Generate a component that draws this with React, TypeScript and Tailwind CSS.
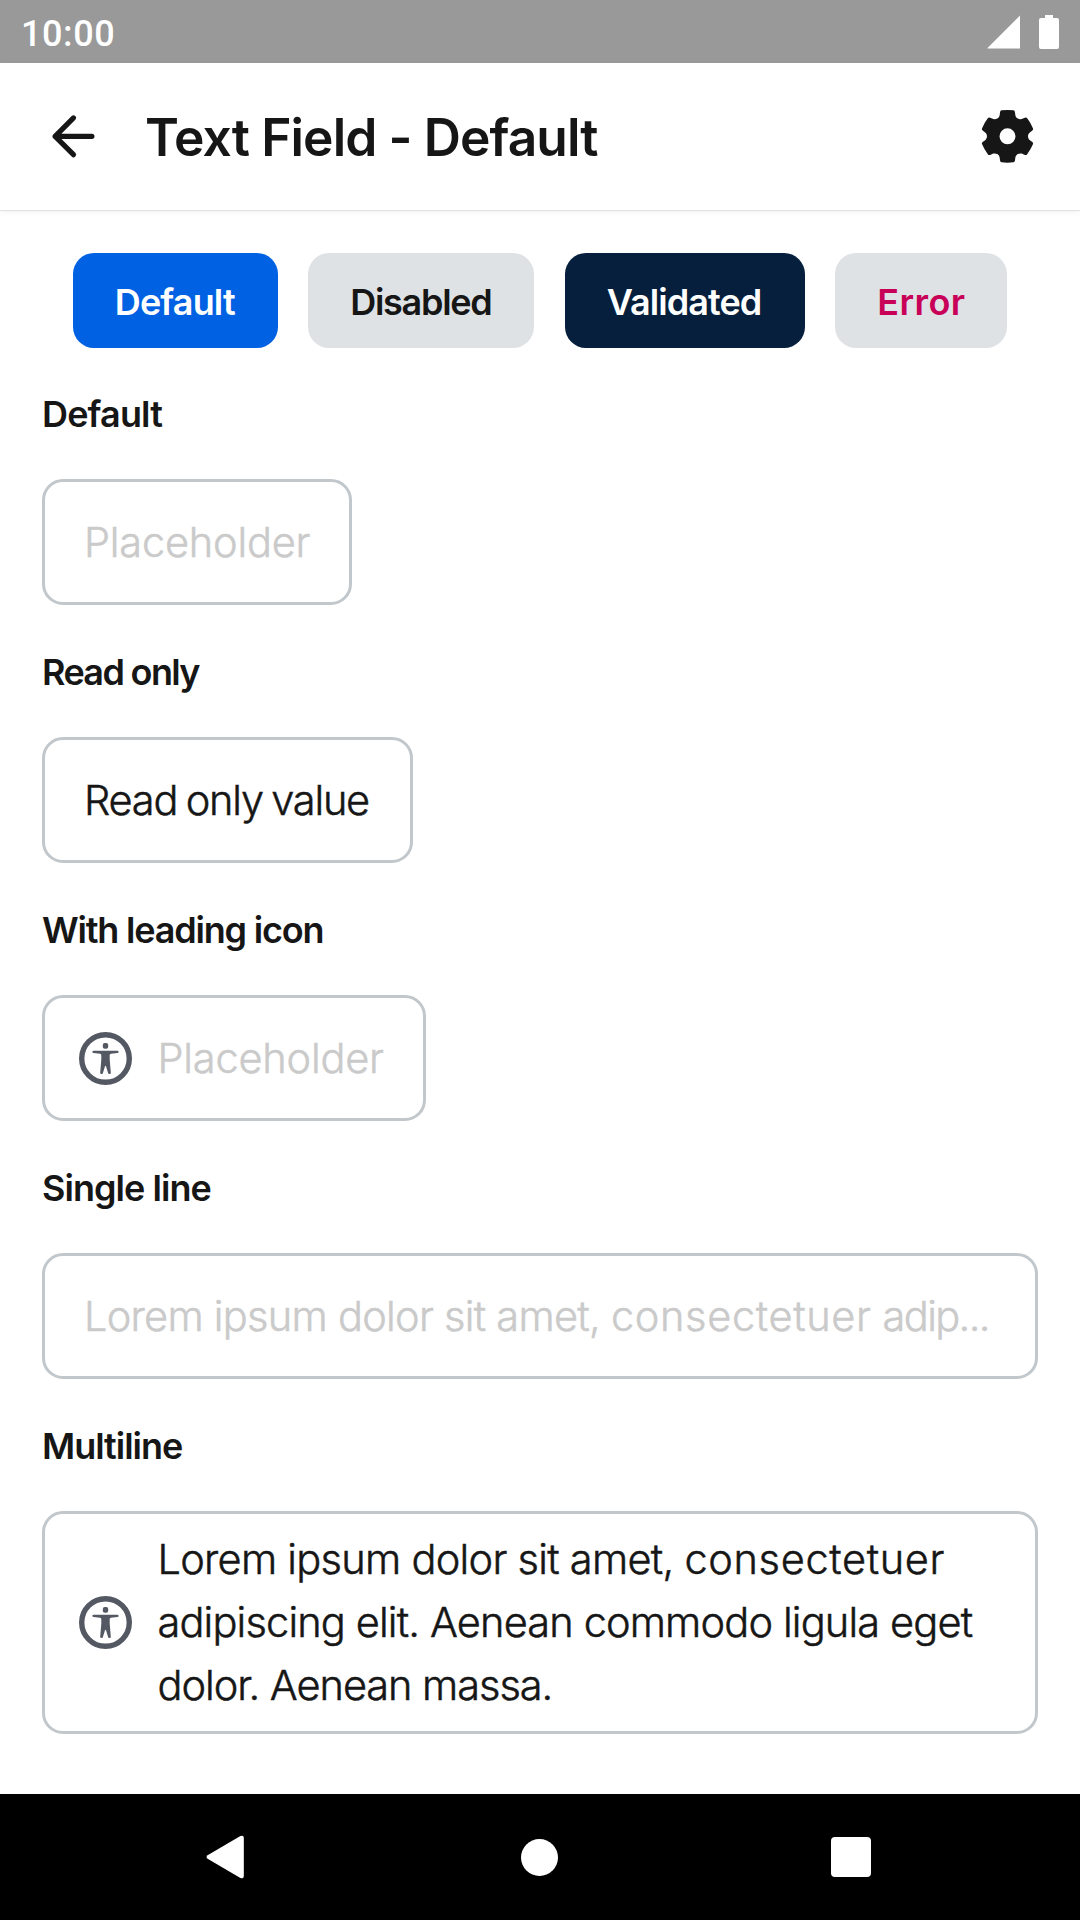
import type { ReactNode } from 'react';

const TOOTH: [string, number[][]][] = [
  ['C', [[-8.9, -18.6], [-8.3, -19.6], [-7.9, -20.9]]],
  ['L', [[-7.4, -24.4]]],
  ['Q', [[-7.2, -25.8], [-6, -26]]],
  ['Q', [[0, -26.8], [6, -26]]],
  ['Q', [[7.2, -25.8], [7.4, -24.4]]],
  ['L', [[7.9, -20.9]]],
  ['C', [[8.3, -19.6], [8.9, -18.6], [10.2, -17.8]]],
];

function gearPath() {
  let d = 'M-10.2 -17.8';
  for (let i = 0; i < 6; i++) {
    const a = (i * Math.PI) / 3;
    const c = Math.cos(a);
    const s = Math.sin(a);
    for (const [cmd, pts] of TOOTH) {
      d += cmd + pts.map(([x, y]) => `${(x * c - y * s).toFixed(2)} ${(x * s + y * c).toFixed(2)}`).join(' ');
    }
  }
  return d + 'Z M8 0A8 8 0 1 0 -8 0A8 8 0 1 0 8 0Z';
}

function GearIcon() {
  return (
    <svg width="54" height="54" viewBox="-27.5 -27.3 54 54" className="mb-px shrink-0">
      <path d={gearPath()} fill="#161616" fillRule="evenodd" />
    </svg>
  );
}

function BackIcon() {
  return (
    <svg width="46" height="46" viewBox="0.5 -0.3 46 46" fill="none" stroke="#161616" strokeWidth="5.2" strokeLinecap="round" strokeLinejoin="round" className="mb-px shrink-0">
      <path d="M23 4.6 4.6 23 23 41.4M4.6 23H41.4" />
    </svg>
  );
}

function AccessibilityIcon() {
  return (
    <svg width="53" height="53" viewBox="-26.5 -26.5 53 53" className="shrink-0">
      <circle r="23.8" fill="none" stroke="#535862" strokeWidth="5.4" />
      <g fill="#535862" stroke="none">
        <rect x="-2.7" y="-15.4" width="5.4" height="5.6" rx="2" />
        <path d="M-12 -7.7H12A1.1 1.1 0 0 1 12 -5.5L5.4 -4.8Q4.2 -4.6 4.2 -3.4V1L5.3 14.2Q5.3 15.6 4.2 15.6H3.6Q2.8 15.6 2.6 14.6L.5 7.8Q0 6.9 -.5 7.8L-2.6 14.6Q-2.8 15.6 -3.6 15.6H-4.2Q-5.3 15.6 -5.3 14.2L-4.2 1V-3.4Q-4.2 -4.6 -5.4 -4.8L-12 -5.5A1.1 1.1 0 0 1 -12 -7.7Z" />
      </g>
    </svg>
  );
}

function StatusBar() {
  return (
    <div className="flex h-[63px] shrink-0 items-center justify-between bg-[#999999] px-[21px] text-white">
      <span className="pt-[4px] font-[Roboto] text-[36px] leading-none font-medium tracking-[0.58px]">10:00</span>
      <div className="flex items-center gap-[19px]">
        <svg width="33" height="34" viewBox="0 0 33 34" fill="white">
          <path d="M.5 33.5V33L33 .5V33.5Z" />
        </svg>
        <svg width="20" height="34" viewBox="0 0 20 34" fill="white">
          <path d="M6 0H14V3H18Q20 3 20 5V32Q20 34 18 34H2Q0 34 0 32V5Q0 3 2 3H6Z" />
        </svg>
      </div>
    </div>
  );
}

function Chip({ className, children }: { className: string; children: ReactNode }) {
  return (
    <button className={`flex h-[95px] items-center rounded-[21px] pt-[2px] pl-[42px] text-[36px] leading-none font-semibold whitespace-nowrap ${className}`}>
      {children}
    </button>
  );
}

function Section({ label, labelClass, fieldClass, icon, children }: {
  label: string;
  labelClass: string;
  fieldClass: string;
  icon?: boolean;
  children: ReactNode;
}) {
  return (
    <section className="mb-[39px] flex flex-col items-start">
      <h2 className={`mb-[38px] pt-px text-[36px] leading-[54px] font-semibold ${labelClass}`}>{label}</h2>
      <div className={`flex items-center rounded-[21px] border-[3px] border-[#c1c7cb] text-[41.5px] leading-[63px] font-light whitespace-nowrap [-webkit-text-stroke:0.5px] ${icon ? 'gap-[25.5px] pl-[34px]' : 'pl-[39px]'} ${fieldClass}`}>
        {icon && <AccessibilityIcon />}
        {children}
      </div>
    </section>
  );
}

function NavBar() {
  return (
    <nav className="flex h-[126px] shrink-0 items-center justify-between bg-black pr-[209px] pl-[206px]">
      <svg width="38" height="44" viewBox="0 0 38 44" fill="white">
        <path d="M1.6 20.2 34.4 1.1Q37.8 -.4 37.8 3V41Q37.8 44.4 34.4 42.9L1.6 23.8Q-.5 22 1.6 20.2Z" />
      </svg>
      <div className="mr-[-4px] size-[37px] rounded-full bg-white" />
      <div className="size-[40px] rounded-[4px] bg-white" />
    </nav>
  );
}

export default function App() {
  return (
    <div className="flex h-[1920px] w-[1080px] flex-col overflow-hidden bg-white font-[Inter,sans-serif] text-[#161616]">
      <StatusBar />
      <header className="z-10 flex h-[147px] shrink-0 items-center bg-white pr-[46px] pl-[51px] shadow-[0_1px_1px_rgba(0,0,0,0.08),0_2px_6px_rgba(0,0,0,0.05)]">
        <BackIcon />
        <h1 className="ml-[48px] flex-1 pt-[2px] text-[51.5px] leading-none font-semibold tracking-[-0.9px]">Text Field - Default</h1>
        <GearIcon />
      </header>
      <main className="flex min-h-0 flex-1 flex-col px-[42px] pt-[43px]">
        <div className="mb-[38px] flex justify-center gap-[30.5px]">
          <Chip className="w-[205px] bg-[#0061e3] tracking-[-0.85px] text-white">Default</Chip>
          <Chip className="w-[226px] bg-[#dfe2e5] tracking-[-1.29px]">Disabled</Chip>
          <Chip className="w-[240px] bg-[#051f3c] tracking-[-0.93px] text-white">Validated</Chip>
          <Chip className="w-[172px] bg-[#dfe2e5] tracking-[0.41px] text-[#c80058]">Error</Chip>
        </div>
        <Section label="Default" labelClass="tracking-[-0.85px]" fieldClass="h-[126px] w-[310px]">
          <span className="tracking-[-0.2px] text-[#cacaca]">Placeholder</span>
        </Section>
        <Section label="Read only" labelClass="tracking-[-1.65px]" fieldClass="h-[126px] w-[371px]">
          <span className="tracking-[-1.2px] [word-spacing:-2px]">Read only value</span>
        </Section>
        <Section label="With leading icon" labelClass="tracking-[-1.19px]" fieldClass="h-[126px] w-[384px]" icon>
          <span className="tracking-[-0.2px] text-[#cacaca]">Placeholder</span>
        </Section>
        <Section label="Single line" labelClass="tracking-[-0.95px]" fieldClass="h-[126px] w-full">
          <p className="tracking-[-0.72px] text-[#cacaca]">
            Lorem ipsum dolor sit amet, <span className="tracking-[0.66px]">consectetuer</span> <span className="tracking-[-1.6px]">adip...</span>
          </p>
        </Section>
        <Section label="Multiline" labelClass="tracking-[-1.03px]" fieldClass="h-[223px] w-full" icon>
          <p className="pb-[1px]">
            <span className="block tracking-[-0.72px]">
              Lorem ipsum dolor sit amet, <span className="tracking-[0.66px]">consectetuer</span>
            </span>
            <span className="block tracking-[-0.84px]">adipiscing elit. Aenean commodo ligula eget</span>
            <span className="block tracking-[-1.04px]">dolor. Aenean massa.</span>
          </p>
        </Section>
      </main>
      <NavBar />
    </div>
  );
}
